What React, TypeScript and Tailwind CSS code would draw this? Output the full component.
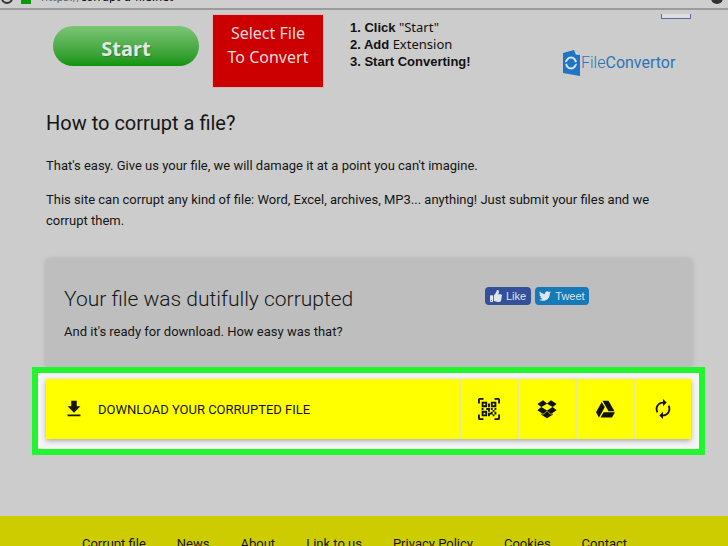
import { FaThumbsUp, FaTwitter } from 'react-icons/fa'
import { MdAutorenew, MdGetApp } from 'react-icons/md'

const LINKS = ['Corrupt file', 'News', 'About', 'Link to us', 'Privacy Policy', 'Cookies', 'Contact']

const QR = 'M4 4H10V10H4V4M20 4V10H14V4H20M14 15H16V13H14V11H16V13H18V11H20V13H18V15H20V18H18V20H16V18H13V20H11V16H14V15M16 15V18H18V15H16M4 20V14H10V20H4M6 6V8H8V6H6M16 6V8H18V6H16M6 16V18H8V16H6M4 11H6V13H4V11M9 11H13V15H11V13H9V11M11 6H13V10H11V6M2 2V6H0V2A2 2 0 0 1 2 0H6V2H2M22 0A2 2 0 0 1 24 2V6H22V2H18V0H22M2 18V22H6V24H2A2 2 0 0 1 0 22V18H2M22 22V18H24V22A2 2 0 0 1 22 24H18V22H22Z'
const DROPBOX = 'M12 14.56L16.35 18.16L18.2 16.95V18.3L12 22L5.82 18.3V16.95L7.68 18.16L12 14.56M7.68 2.5L12 6.09L16.32 2.5L22.5 6.5L18.23 9.94L22.5 13.36L16.32 17.39L12 13.78L7.68 17.39L1.5 13.36L5.77 9.94L1.5 6.5L7.68 2.5M12 13.68L18.13 9.94L12 6.19L5.87 9.94L12 13.68Z'
const DRIVE = 'M7.71 3.5L1.15 15L4.58 21L11.13 9.5M9.73 15L6.3 21H19.42L22.85 15M22.28 14L15.42 2H8.58L15.43 14H22.28Z'

function Icon({ d, className }: { d: string; className: string }) {
  return <svg viewBox="0 0 24 24" fill="currentColor" className={className} aria-hidden="true"><path d={d} /></svg>
}

const ACTIONS = [
  { label: 'Show QR code', icon: <Icon d={QR} className="size-[22px]" /> },
  { label: 'Save to Dropbox', icon: <Icon d={DROPBOX} className="size-[22px]" /> },
  { label: 'Save to Google Drive', icon: <Icon d={DRIVE} className="size-[21px]" /> },
  { label: 'Start again', icon: <MdAutorenew className="size-[22px]" /> },
]

function AddressBar() {
  return (
    <header className="flex h-[10px] items-end overflow-hidden border-b-2 border-[#9c9c9c] bg-[#cfcfcf] px-px pb-1 leading-3">
      <span className="size-3 shrink-0 rounded-full border-2 border-[#333]" />
      <span className="ml-2 h-3 w-[10px] shrink-0 bg-[#0a9a0a]" />
      <span className="ml-[10px] flex-1 font-['DejaVu_Sans',sans-serif] text-[11px] text-[#666]">https://<span className="text-black">corrupt-a-file.net</span></span>
      <span className="mr-1 size-3 shrink-0 rounded-full bg-[#333]" />
    </header>
  )
}

function FileConvertorLogo() {
  return (
    <a href="#convertor" className="flex items-center gap-px text-[16px] leading-6 text-[#2b74b5]">
      <svg viewBox="0 0 18 26" className="h-[26px] w-[18px]" aria-hidden="true">
        <path d="M1 3 12 0l6 5v21L1 23Z" fill="#1f74c4" />
        <path d="m12 0 6 5-4-.5Z" fill="#d5e3f0" />
        <ellipse cx="9" cy="13" rx="5" ry="5.500" fill="none" stroke="#dce6ef" strokeWidth="2" />
        <path d="m2 14 4-2M12 14l4-2" stroke="#1f74c4" strokeWidth="1.500" />
      </svg>
      <span><span className="font-light">File</span>Convertor</span>
    </a>
  )
}

function Banner() {
  return (
    <section className="flex h-[74px] items-start pl-[53px] font-['Noto_Sans',sans-serif]">
      <button className="mt-3 h-10 w-[146px] shrink-0 rounded-full bg-linear-to-b from-[#7cc576] to-[#089408] pt-1 text-[20px] font-bold text-[#e2e8e0] [text-shadow:1px_1px_1px_#3a7a3a]">Start</button>
      <button className="ml-[13px] h-[74px] w-[112px] shrink-0 border border-[#ddb5b5] bg-[#cc0000] pb-3 text-[16px] leading-6 text-[#eedcdc]">Select File<br />To Convert</button>
      <ol className="ml-[26px] mt-[5px] w-[212px] shrink-0 text-[13px] leading-[17px] text-[#111]">
        <li className="h-[17px]"><b className="font-['Liberation_Sans',sans-serif]">1. Click</b> "Start"</li>
        <li className="h-[17px]"><b className="font-['Liberation_Sans',sans-serif]">2. Add</b> Extension</li>
        <li className="h-[17px]"><b className="font-['Liberation_Sans',sans-serif]">3. Start Converting!</b></li>
      </ol>
      <div className="flex flex-1 flex-col font-['Roboto',sans-serif]">
        <span className="ml-[99px] h-[5px] w-[30px] border border-t-0 border-[#5a6cae] bg-[#dedede]" />
        <div className="mt-[31px]"><FileConvertorLogo /></div>
      </div>
    </section>
  )
}

export default function App() {
  return (
    <div className="h-screen overflow-hidden bg-[#cccccc] font-['Roboto',sans-serif] text-[13px] leading-[21px] text-[#151515]">
      <AddressBar />
      <div className="mt-1"><Banner /></div>

      <main className="ml-[46px] mr-9 mt-[23px]">
        <h1 className="text-[20px] leading-6">How to corrupt a file?</h1>
        <p className="mt-5 pr-5">That's easy. Give us your file, we will damage it at a point you can't imagine.</p>
        <p className="mt-[13px] pr-5">This site can corrupt any kind of file: Word, Excel, archives, MP3... anything! Just submit your files and we corrupt them.</p>

        <section className="mt-7 flex h-[108px] justify-between rounded-t-sm bg-[#bebebe] pl-[18px] pt-7 shadow-[0_0_5px_#aaa]">
          <div>
            <h2 className="text-[21px] font-light leading-6">Your file was dutifully corrupted</h2>
            <p className="mt-[10px]">And it's ready for download. How easy was that?</p>
          </div>
          <div className="mr-[103px] flex h-[18px] gap-1 font-['Liberation_Sans',sans-serif] text-[11px] text-[#dfe5ee]">
            <button className="flex w-[46px] items-center justify-center gap-1 rounded-sm bg-[#34509a]"><FaThumbsUp className="size-3" />Like</button>
            <button className="flex w-[54px] items-center justify-center gap-1 rounded-sm bg-[#1679b8]"><FaTwitter className="size-3" />Tweet</button>
          </div>
        </section>
      </main>

      <div className="relative ml-8 mr-[23px] border-[6px] border-[#22f52e] bg-[#f5f5f5] px-2 pb-[10px] pt-[6px]">
        <div className="flex h-[60px] bg-[#ffff00] shadow-[0_2px_5px_#aaa]">
          <button className="flex flex-1 items-center gap-[13px] pl-[17px] text-left"><MdGetApp className="size-[22px]" />DOWNLOAD YOUR CORRUPTED FILE</button>
          {ACTIONS.map((a) => (
            <button key={a.label} aria-label={a.label} className="flex w-[58px] items-center justify-center border-l-2 border-[#e8e89a] text-[#111]">{a.icon}</button>
          ))}
        </div>
      </div>

      <footer className="mt-[61px] h-20 bg-[#cccc00] pt-[17px]">
        <nav className="flex justify-center gap-[31px] pr-[19px]">
          {LINKS.map((l) => <a key={l} href="#footer">{l}</a>)}
        </nav>
      </footer>
    </div>
  )
}
